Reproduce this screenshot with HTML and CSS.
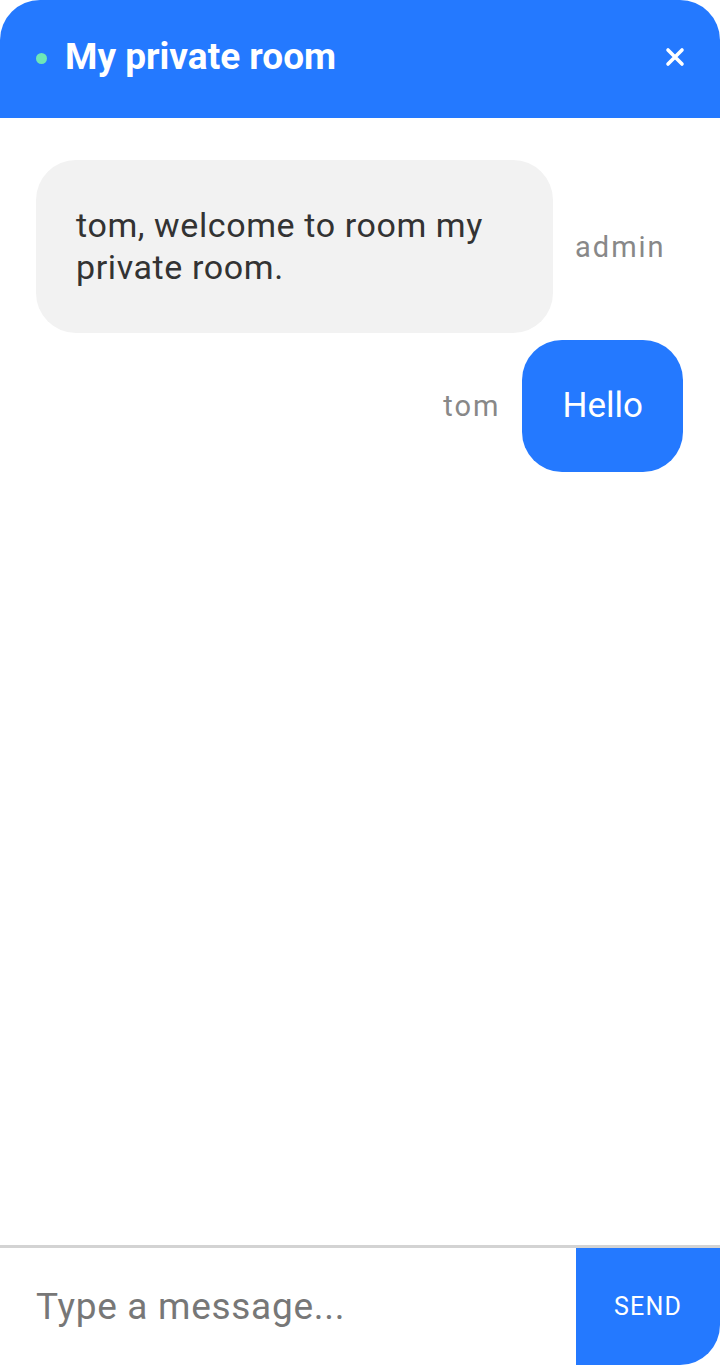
FILE: index.html
```html
<!DOCTYPE html>
<html>
<head>
<meta charset="utf-8">
<link rel="stylesheet" href="styles.css">
</head>
<body>
<div class="chat">
  <header class="chat-header">
    <span class="status-dot"></span>
    <h1 class="chat-title">My private room</h1>
    <button class="close-btn" aria-label="Close">
      <svg width="22" height="22" viewBox="0 0 22 22"><path d="M4 4L18 18M18 4L4 18" stroke="#fff" stroke-width="3.6" stroke-linecap="round"/></svg>
    </button>
  </header>
  <main class="messages">
    <div class="msg msg-in">
      <div class="bubble bubble-in">tom, welcome to room my private room.</div>
      <span class="sender">admin</span>
    </div>
    <div class="msg msg-out">
      <span class="sender">tom</span>
      <div class="bubble bubble-out">Hello</div>
    </div>
  </main>
  <footer class="composer">
    <input class="composer-input" type="text" placeholder="Type a message...">
    <button class="send-btn">SEND</button>
  </footer>
</div>
</body>
</html>
```
FILE: styles.css
```css
* { box-sizing: border-box; }
html, body { margin: 0; padding: 0; background: #fff; }
body { font-family: Roboto, "Liberation Sans", sans-serif; }
.chat {
  width: 720px;
  height: 1365px;
  display: flex;
  flex-direction: column;
  overflow: hidden;
}
.chat-header {
  height: 118px;
  flex: none;
  background: #2479ff;
  border-radius: 40px 40px 0 0;
  display: flex;
  align-items: center;
  padding: 0 34px 0 36px;
}
.status-dot {
  width: 11px;
  height: 11px;
  border-radius: 50%;
  background: #6ee7b7;
  flex: none;
  margin-top: -2px;
}
.chat-title {
  margin: -6px 0 0 18px;
  font-size: 37px;
  font-weight: 700;
  color: #fff;
  flex: 1;
}
.close-btn {
  background: none;
  border: 0;
  padding: 0;
  width: 22px;
  height: 22px;
  display: flex;
  align-items: center;
  justify-content: center;
  margin-top: -4px;
}
.messages {
  flex: 1;
  padding: 42px 37px 0 36px;
  display: flex;
  flex-direction: column;
  gap: 7px;
}
.msg {
  display: flex;
  align-items: center;
  gap: 22px;
}
.msg-out { justify-content: flex-end; }
.bubble {
  border-radius: 40px;
}
.bubble-in {
  width: 517px;
  background: #f2f2f2;
  color: #333;
  font-size: 34px;
  line-height: 42px;
  letter-spacing: 0.6px;
  padding: 44px 30px 45px 40px;
}
.bubble-out {
  background: #2479ff;
  color: #fff;
  font-size: 35px;
  line-height: 44px;
  padding: 44px 40px;
}
.sender {
  color: #888;
  font-size: 29px;
  letter-spacing: 2px;
}
.composer {
  flex: none;
  height: 120px;
  border-top: 3px solid #d3d3d3;
  display: flex;
}
.composer-input {
  flex: 1;
  border: 0;
  outline: none;
  padding: 0 36px;
  font-family: Roboto, "Liberation Sans", sans-serif;
  font-size: 37px;
  letter-spacing: 0.7px;
  color: #333;
  background: #fff;
}
.composer-input::placeholder { color: #777; }
.send-btn {
  width: 144px;
  border: 0;
  background: #2479ff;
  color: #fff;
  font-family: Roboto, "Liberation Sans", sans-serif;
  font-size: 25px;
  letter-spacing: 1.2px;
  border-radius: 0 0 40px 0;
  padding: 0;
}
```
